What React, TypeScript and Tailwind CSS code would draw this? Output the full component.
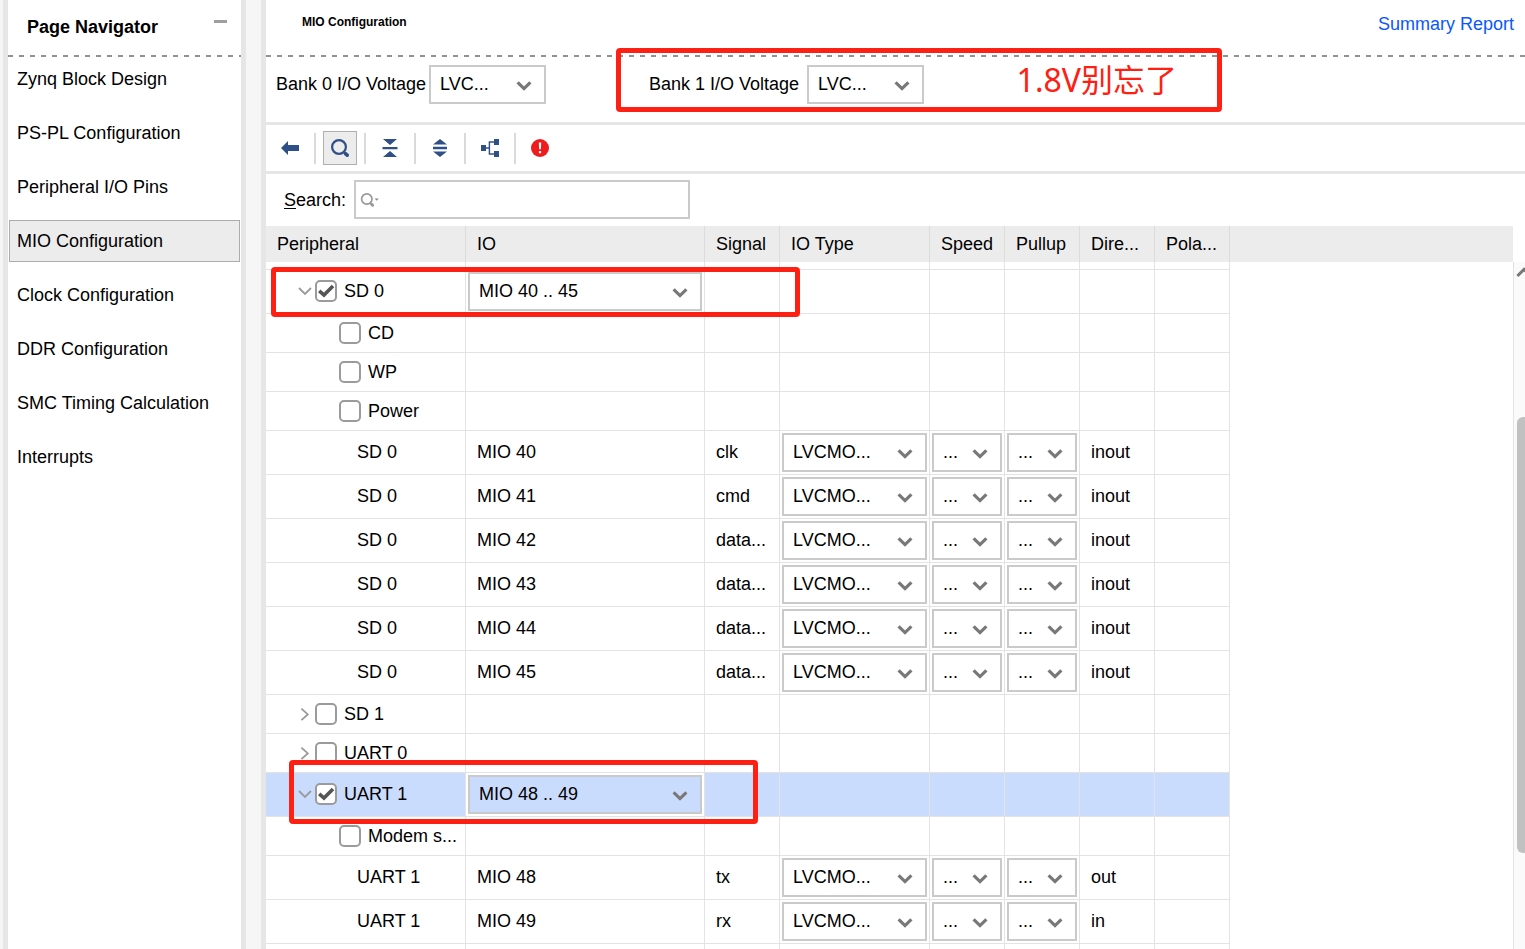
import { useState, type ReactNode } from "react";

const navItems = [
  "Zynq Block Design",
  "PS-PL Configuration",
  "Peripheral I/O Pins",
  "MIO Configuration",
  "Clock Configuration",
  "DDR Configuration",
  "SMC Timing Calculation",
  "Interrupts",
];

type Row = {
  kind: "group" | "option" | "pin";
  name: string;
  io?: string;
  open?: boolean;
  checked?: boolean;
  selected?: boolean;
  signal?: string;
  direction?: string;
};

const rows: Row[] = [
  { kind: "group", name: "SD 0", io: "MIO 40 .. 45", open: true, checked: true },
  { kind: "option", name: "CD" },
  { kind: "option", name: "WP" },
  { kind: "option", name: "Power" },
  { kind: "pin", name: "SD 0", io: "MIO 40", signal: "clk", direction: "inout" },
  { kind: "pin", name: "SD 0", io: "MIO 41", signal: "cmd", direction: "inout" },
  { kind: "pin", name: "SD 0", io: "MIO 42", signal: "data...", direction: "inout" },
  { kind: "pin", name: "SD 0", io: "MIO 43", signal: "data...", direction: "inout" },
  { kind: "pin", name: "SD 0", io: "MIO 44", signal: "data...", direction: "inout" },
  { kind: "pin", name: "SD 0", io: "MIO 45", signal: "data...", direction: "inout" },
  { kind: "group", name: "SD 1" },
  { kind: "group", name: "UART 0" },
  { kind: "group", name: "UART 1", io: "MIO 48 .. 49", open: true, checked: true, selected: true },
  { kind: "option", name: "Modem s..." },
  { kind: "pin", name: "UART 1", io: "MIO 48", signal: "tx", direction: "out" },
  { kind: "pin", name: "UART 1", io: "MIO 49", signal: "rx", direction: "in" },
];

const columns = ["Peripheral", "IO", "Signal", "IO Type", "Speed", "Pullup", "Dire...", "Pola..."];

function Dashes() {
  return (
    <div className="h-0.5 shrink-0 bg-[repeating-linear-gradient(90deg,#939393_0px,#939393_5px,transparent_5px,transparent_11px)]" />
  );
}

function Select({ id, label, value, tinted }: { id?: string; label?: string; value: string; tinted?: boolean }) {
  return (
    <div className="relative h-[39px] w-full">
      <select
        id={id}
        aria-label={label}
        defaultValue={value}
        className={`h-full w-full appearance-none border-2 border-[#cacaca] pb-0.5 pl-[9px] text-lg leading-6 outline-none ${
          tinted ? "bg-[#cadcfd]" : "bg-white"
        }`}
      >
        <option>{value}</option>
      </select>
      <svg className="pointer-events-none absolute top-4 right-3.5" width="16" height="10" viewBox="0 0 16 10" fill="none">
        <path d="M1.6 1.4 8 7.6 14.4 1.4" stroke="#787878" strokeWidth="3.2" />
      </svg>
    </div>
  );
}

function Check({ label, initial }: { label: string; initial?: boolean }) {
  const [on, setOn] = useState(!!initial);
  return (
    <label className="flex items-center gap-[7px]">
      <span className="relative flex size-[22px] shrink-0">
        <input
          type="checkbox"
          checked={on}
          onChange={() => setOn(!on)}
          className="size-full appearance-none rounded-[5px] border-2 border-[#9b9b9b] bg-white"
        />
        {on && (
          <svg className="pointer-events-none absolute inset-0" width="22" height="22" viewBox="0 0 22 22" fill="none">
            <path d="M4.2 10.8 9 15 18 6" stroke="#555" strokeWidth="3.6" />
          </svg>
        )}
      </span>
      <span className="whitespace-nowrap">{label}</span>
    </label>
  );
}

function Expander({ open, name }: { open?: boolean; name: string }) {
  return (
    <button type="button" aria-label={`Toggle ${name}`} className="mr-[3px] flex h-5 w-3.5 items-center justify-center">
      <svg width="14" height="14" viewBox="0 0 14 14" fill="none" stroke="#9a9a9a" strokeWidth="1.8">
        <path d={open ? "M1 4 7 10 13 4" : "M3.4 1.6 9.8 7.4 3.4 13.2"} />
      </svg>
    </button>
  );
}

function Cell({ children, className = "" }: { children?: ReactNode; className?: string }) {
  return <td className={`border-r border-b border-[#e3e3e3] whitespace-nowrap ${className}`}>{children}</td>;
}

function TableRow({ row }: { row: Row }) {
  const pin = row.kind === "pin";
  const tall = pin || row.open;
  return (
    <tr className={`${tall ? "h-11" : "h-[39px]"} ${row.selected ? "bg-[#cadcfd]" : ""}`}>
      <Cell className={tall ? "p-0 pb-0.5" : "p-0"}>
        {row.kind === "group" && (
          <div className="flex items-center pl-8">
            <Expander open={row.open} name={row.name} />
            <Check label={row.name} initial={row.checked} />
          </div>
        )}
        {row.kind === "option" && (
          <div className="pl-[73px]">
            <Check label={row.name} />
          </div>
        )}
        {pin && <div className="pl-[91px]">{row.name}</div>}
      </Cell>
      {row.kind === "group" && row.io ? (
        <Cell className="bg-white p-0 px-0.5">
          <Select label={`${row.name} IO`} value={row.io} tinted={row.selected} />
        </Cell>
      ) : (
        <Cell className="p-0 pb-0.5 pl-[11px]">{row.io}</Cell>
      )}
      <Cell className="p-0 pb-0.5 pl-[11px]">{row.signal}</Cell>
      <Cell className="p-0 px-0.5">{pin && <Select label={`${row.io} IO type`} value="LVCMO..." />}</Cell>
      <Cell className="p-0 px-0.5">{pin && <Select label={`${row.io} speed`} value="..." />}</Cell>
      <Cell className="p-0 px-0.5">{pin && <Select label={`${row.io} pullup`} value="..." />}</Cell>
      <Cell className="p-0 pb-0.5 pl-[11px]">{row.direction}</Cell>
      <Cell className="p-0" />
    </tr>
  );
}

function ToolButton({ label, active, children }: { label: string; active?: boolean; children: ReactNode }) {
  return (
    <button
      type="button"
      aria-label={label}
      className={`flex size-[34px] items-center justify-center border ${
        active ? "border-[#b0b0b0] bg-[#ececec]" : "border-transparent"
      }`}
    >
      <svg width="20" height="20" viewBox="0 0 20 20">
        {children}
      </svg>
    </button>
  );
}

function Separator() {
  return <span className="mx-[7px] h-[31px] w-0.5 bg-[#dadada]" />;
}

function Toolbar() {
  return (
    <div className="flex h-[49px] shrink-0 items-center border-b-[3px] border-[#e6e6e6] pl-[7px]">
      <ToolButton label="Back">
        <path d="M1 10 8 3V7H19V13H8V17Z" fill="#2f4f87" />
      </ToolButton>
      <Separator />
      <ToolButton label="Search" active>
        <circle cx="9" cy="9" r="6.9" fill="none" stroke="#2f4f87" strokeWidth="2.2" />
        <path d="M15.4 15.6 17.2 17.2" stroke="#2f4f87" strokeWidth="3.6" strokeLinecap="round" />
      </ToolButton>
      <Separator />
      <ToolButton label="Collapse all">
        <path d="M3 1H17L10 7ZM2.5 9H17.5V11.2H2.5ZM3 19H17L10 13Z" fill="#2f4f87" />
      </ToolButton>
      <Separator />
      <ToolButton label="Expand all">
        <path d="M3 6.6 10 1 17 6.6ZM3 8.8H17V11.2H3ZM3 13.4H17L10 19Z" fill="#2f4f87" />
      </ToolButton>
      <Separator />
      <ToolButton label="Hierarchy">
        <path d="M1 7H6V13H1ZM14 1H19V7H14ZM14 13H19V19H14Z" fill="#2f4f87" />
        <path d="M6 10H9.4M14 4H9.4V16H14" fill="none" stroke="#2f4f87" strokeWidth="1.4" />
      </ToolButton>
      <Separator />
      <ToolButton label="Errors">
        <circle cx="10" cy="10" r="9" fill="#ee1c1c" />
        <path d="M8.8 4.4H11.2L10.9 11.2H9.1ZM8.9 13H11.1V15.2H8.9Z" fill="#fff" />
      </ToolButton>
    </div>
  );
}

export default function App() {
  return (
    <div className="flex h-screen overflow-hidden bg-[#f6f6f6] pl-[3px] font-['Liberation_Sans','Noto_Sans_CJK_SC',sans-serif] text-lg leading-6 text-black">
      <aside className="flex w-[243px] shrink-0 flex-col border-x-[5px] border-[#e6e6e6] bg-white">
        <div className="flex h-[55px] shrink-0 items-start justify-between pt-[15px] pr-3.5 pl-[19px]">
          <h2 className="font-bold">Page Navigator</h2>
          <button type="button" aria-label="Minimize" className="flex h-3 items-center">
            <span className="h-[3px] w-[13px] bg-[#9f9f9f]" />
          </button>
        </div>
        <Dashes />
        <nav className="flex flex-col gap-3 px-px pt-px">
          {navItems.map((item) => (
            <a
              key={item}
              href="#"
              className={`flex h-[42px] items-center border px-[7px] whitespace-nowrap ${
                item === "MIO Configuration" ? "border-[#acacac] bg-[#ececec]" : "border-transparent"
              }`}
            >
              {item}
            </a>
          ))}
        </nav>
      </aside>

      <main className="ml-[15px] flex min-w-0 flex-1 flex-col border-l-[5px] border-[#e6e6e6] bg-white">
        <header className="flex h-[55px] shrink-0 items-start justify-between pt-3 pr-[11px] pl-9">
          <h1 className="text-xs leading-5 font-bold">MIO Configuration</h1>
          <a href="#" className="text-[#0a57ff]">
            Summary Report
          </a>
        </header>
        <Dashes />

        <div className="relative flex h-[68px] shrink-0 items-start border-b-[3px] border-[#e6e6e6] pt-2 pl-2.5">
          <div className="flex items-center">
            <label htmlFor="bank0" className="w-[153px] pb-0.5 whitespace-nowrap">
              Bank 0 I/O Voltage
            </label>
            <div className="w-[117px]">
              <Select id="bank0" value="LVC..." />
            </div>
          </div>
          <div className="ml-[103px] flex items-center">
            <label htmlFor="bank1" className="w-[158px] pb-0.5 whitespace-nowrap">
              Bank 1 I/O Voltage
            </label>
            <div className="w-[117px]">
              <Select id="bank1" value="LVC..." />
            </div>
          </div>
          <div className="pointer-events-none absolute -top-[9px] left-[350px] flex h-16 w-[606px] items-center justify-end rounded border-[5px] border-[#ff2014] pr-10 text-[32px] text-[#ff2014]">
            <span className="font-['Noto_Sans','Noto_Sans_CJK_SC',sans-serif]">1.8V别忘了</span>
          </div>
        </div>

        <Toolbar />

        <div className="flex h-[52px] shrink-0 items-center pb-px pl-[18px]">
          <label htmlFor="search" className="w-[70px]">
            <span className="underline underline-offset-2">S</span>earch:
          </label>
          <div className="relative h-[39px] w-[336px]">
            <input id="search" type="text" className="h-full w-full border-2 border-[#cacaca] pr-2 pl-8 outline-none" />
            <svg className="pointer-events-none absolute top-3 left-1.5" width="20" height="16" viewBox="0 0 20 16" fill="none">
              <circle cx="6.8" cy="7" r="5.2" stroke="#999" strokeWidth="1.7" />
              <path d="M11.4 12 12.6 13.2" stroke="#999" strokeWidth="3" strokeLinecap="round" />
              <path d="M14.6 6.6H18.8L16.7 8.8Z" fill="#888" />
            </svg>
          </div>
        </div>

        <div className="flex min-h-0 flex-1">
          <div className="relative min-w-0 flex-1 overflow-hidden">
            <div className="absolute inset-x-0 top-0 h-9 bg-[#ececec]" />
            <table className="relative w-[964px] table-fixed border-separate border-spacing-0">
              <colgroup>
                <col className="w-[200px]" />
                <col className="w-[239px]" />
                <col className="w-[75px]" />
                <col className="w-[150px]" />
                <col className="w-[75px]" />
                <col className="w-[75px]" />
                <col className="w-[75px]" />
                <col className="w-[75px]" />
              </colgroup>
              <thead>
                <tr className="h-9">
                  {columns.map((c) => (
                    <th key={c} className="border-r border-[#dcdcdc] p-0 pl-[11px] text-left font-normal whitespace-nowrap">
                      {c}
                    </th>
                  ))}
                </tr>
              </thead>
              <tbody>
                <tr className="h-2">
                  {columns.map((c) => (
                    <Cell key={c} className="p-0" />
                  ))}
                </tr>
                {rows.map((row, i) => (
                  <TableRow key={i} row={row} />
                ))}
                <tr className="h-[39px]">
                  {columns.map((c) => (
                    <Cell key={c} className="p-0" />
                  ))}
                </tr>
              </tbody>
            </table>
            <div className="pointer-events-none absolute top-[41px] left-[5px] h-[50px] w-[529px] rounded border-[5px] border-[#ff2014]" />
            <div className="pointer-events-none absolute top-[534px] left-[23px] h-16 w-[469px] rounded border-[5px] border-[#ff2014]" />
          </div>
          <div className="mt-9 flex w-3 shrink-0 flex-col overflow-hidden border-l border-[#e3e3e3] bg-[#fafafa]">
            <svg className="mt-1 ml-0.5 shrink-0" width="16" height="12" viewBox="0 0 16 12" fill="none">
              <path d="M1.4 10 8 3.4 14.6 10" stroke="#787878" strokeWidth="3" />
            </svg>
            <div className="flex-[139]" />
            <div className="ml-[3px] w-4 flex-[436] rounded-md bg-[#c1c1c1]" />
            <div className="flex-[96]" />
          </div>
        </div>
      </main>
    </div>
  );
}
